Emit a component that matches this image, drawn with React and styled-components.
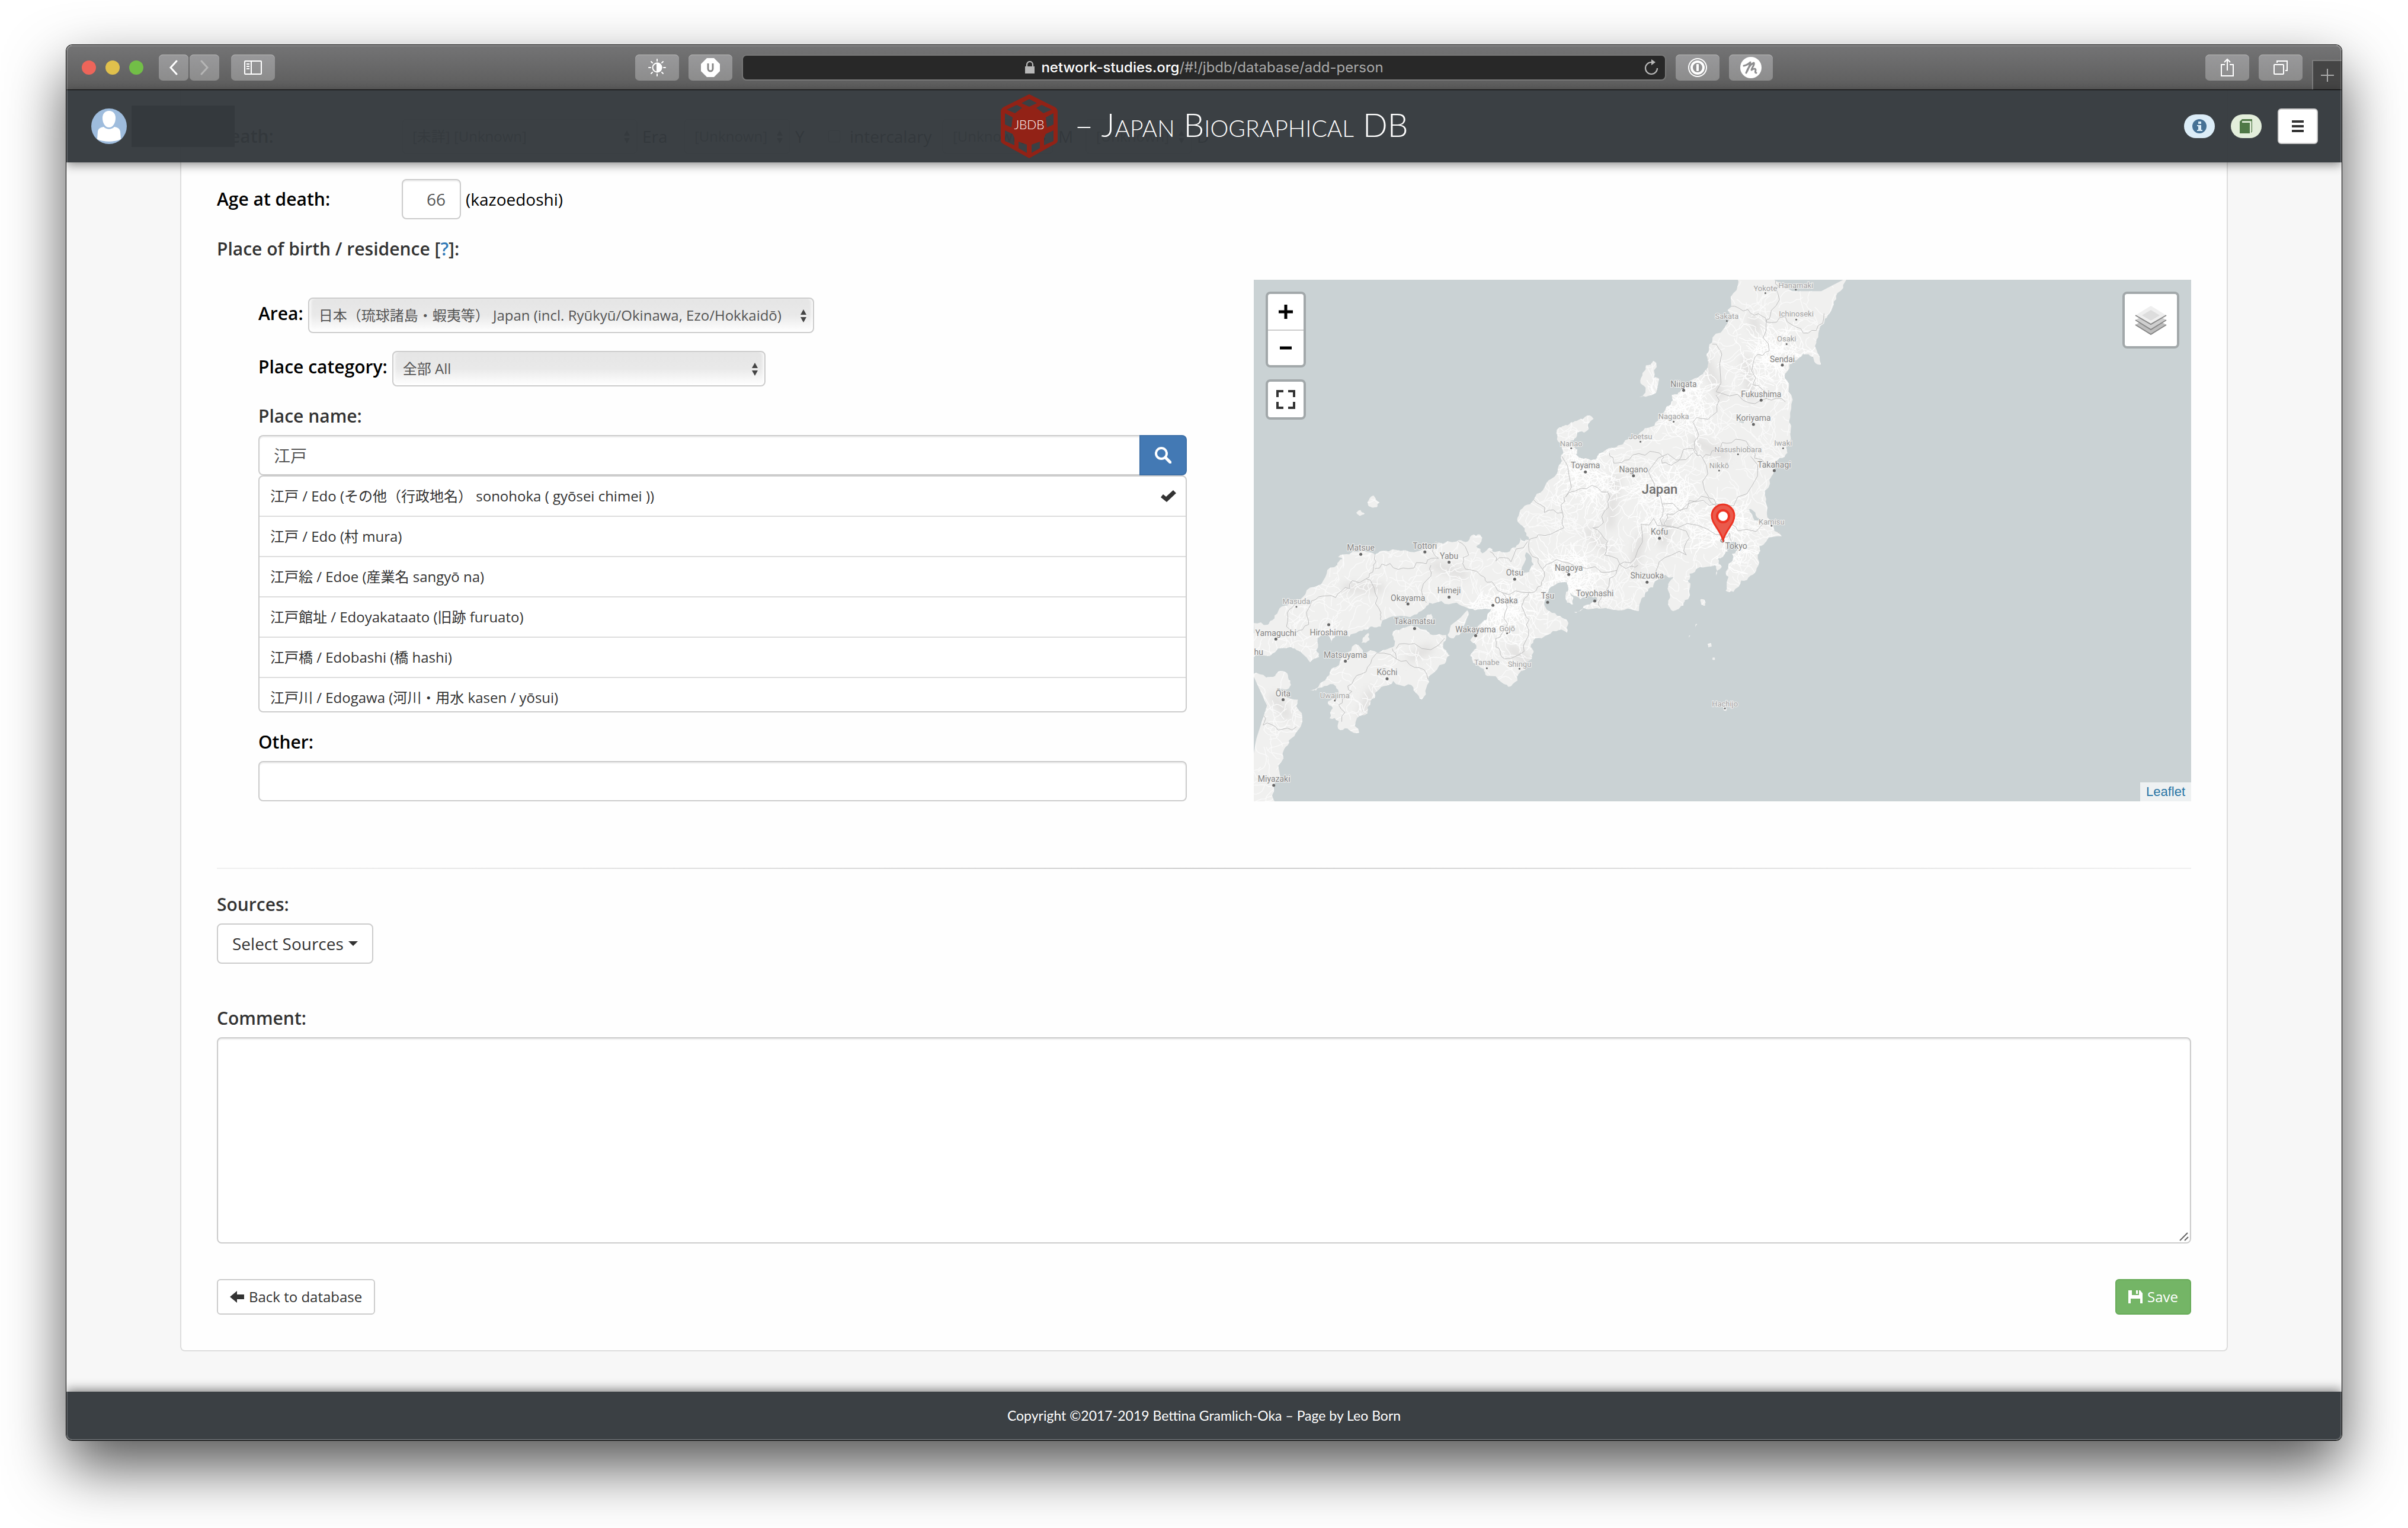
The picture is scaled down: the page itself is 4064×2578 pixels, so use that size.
import React from "react";
import styled, { createGlobalStyle, css } from "styled-components";

const sans = `"Open Sans", "Noto Sans CJK JP", sans-serif`;
const displaySans = `Lato, "Noto Sans CJK JP", sans-serif`;
const systemSans = `Inter, "Noto Sans CJK JP", sans-serif`;

const GlobalStyle = createGlobalStyle`
  * { box-sizing: border-box; }
  body { margin: 0; background: #fff; color: #333; font: 28px/40px ${sans}; }
  button, input, select, textarea { font: inherit; margin: 0; }
  button { cursor: pointer; }
  svg { display: block; flex: none; }
`;

/* ---------- window ---------- */

const Desktop = styled.div`
  padding: 76px 112px 148px;
`;

const Window = styled.div`
  position: relative;
  overflow: hidden;
  border-radius: 10px;
  background: #f7f7f7;
  &::after {
    content: "";
    position: absolute;
    inset: 0;
    z-index: 5;
    border-radius: 10px;
    box-shadow: inset 0 0 0 2px rgba(255, 255, 255, 0.2);
    pointer-events: none;
  }
`;

const WindowShadow = styled.div`
  border-radius: 10px;
  box-shadow: 0 0 0 1px #000, 0 44px 100px rgba(0, 0, 0, 0.68);
`;

const TitleBar = styled.div`
  display: grid;
  grid-template-columns: 1fr 2fr 1fr;
  height: 76px;
  background: linear-gradient(#747475, #5c5c5c);
  border-bottom: 1px solid #000;
`;

const BarGroup = styled.div`
  display: flex;
  align-items: center;
  gap: 16px;
  justify-content: ${(p) => (p.$end ? "flex-end" : "flex-start")};
  padding-left: ${(p) => (p.$inset ? "26px" : "0")};
`;

const Light = styled.span`
  width: 24px;
  height: 24px;
  border-radius: 50%;
  background: ${(p) => p.$color};
`;

const NavPair = styled.div`
  display: flex;
  gap: 2px;
  margin: 0 4px 0 10px;
`;

const BarButton = styled.button`
  display: grid;
  place-items: center;
  width: ${(p) => (p.$narrow ? "50px" : "74px")};
  height: 44px;
  padding: 0;
  border: 0;
  border-radius: 7px;
  background: linear-gradient(#99999b, #8c8c8c);
  box-shadow: inset 0 1px 0 #b4b4b4;
`;

const Address = styled.div`
  position: relative;
  flex: 1;
  display: flex;
  align-items: center;
  justify-content: center;
  gap: 10px;
  height: 44px;
  border: 2px solid #777;
  border-radius: 8px;
  background: #282828;
  color: #a9a9a9;
  font: 24px/30px ${systemSans};
  b { color: #fff; font-weight: 500; }
`;

const Reload = styled.button`
  position: absolute;
  right: 10px;
  padding: 0;
  border: 0;
  background: none;
`;

const NewTab = styled.button`
  display: grid;
  place-items: center;
  align-self: flex-end;
  width: 50px;
  height: 50px;
  padding: 0;
  border: solid #7d7d7d;
  border-width: 2px 0 0 2px;
  background: #454545;
`;

/* ---------- site header ---------- */

const SiteHeader = styled.header`
  position: relative;
  z-index: 2;
  display: grid;
  grid-template-columns: 1fr auto 1fr;
  align-items: center;
  height: 122px;
  padding: 0 40px 0 42px;
  background: rgba(53, 58, 62, 0.97);
  box-shadow: 0 4px 16px rgba(0, 0, 0, 0.45);
`;

const User = styled.div`
  display: flex;
  align-items: center;
  gap: 8px;
`;

const UserName = styled.span`
  width: 174px;
  height: 70px;
  background: #34393d;
`;

const Brand = styled.h1`
  display: flex;
  align-items: center;
  gap: 28px;
  margin: 0;
  color: #fff;
  font: 300 55px/60px ${displaySans};
  font-variant: small-caps;
`;

const BrandName = styled.span`
  padding-bottom: 6px;
`;

const Tools = styled.div`
  display: flex;
  align-items: center;
  justify-content: flex-end;
  gap: 27px;
`;

const Badge = styled.button`
  display: grid;
  place-items: center;
  width: 52px;
  height: 40px;
  padding: 0;
  border: 0;
  border-radius: 20px;
  background: ${(p) => p.$bg};
`;

const MenuButton = styled.button`
  display: grid;
  place-items: center;
  width: 68px;
  height: 60px;
  padding: 0;
  border: 2px solid #ccc;
  border-radius: 6px;
  background: #fff;
`;

/* ---------- form ---------- */

const Main = styled.main`
  margin-top: -122px;
  padding: 0 192px 68px;
`;

const Panel = styled.form`
  padding: 48px 60px 60px;
  border: solid #ddd;
  border-width: 0 2px 2px;
  border-radius: 0 0 8px 8px;
  background: #fefefe;
`;

const Row = styled.div`
  display: flex;
  align-items: center;
  gap: 8px;
  margin-bottom: ${(p) => p.$after || 0}px;
  color: #000;
`;

const Label = styled.label`
  display: block;
  color: ${(p) => (p.$soft ? "#333" : "#000")};
  font: 600 30px/40px ${sans};
  ${(p) =>
    p.$column &&
    css`
      width: 304px;
      flex: none;
    `}
  ${(p) =>
    p.$above &&
    css`
      margin-bottom: 12px;
    `}
  ${(p) =>
    p.$inline &&
    css`
      padding-bottom: 6px;
    `}
`;

const Unit = styled.span`
  width: ${(p) => p.$width}px;
  flex: none;
`;

const Heading = styled.h2`
  margin: 30px 0 32px;
  font: 600 30px/40px ${sans};
  a { color: #337ab7; text-decoration: none; }
`;

const field = css`
  border: 2px solid #ccc;
  border-radius: 8px;
  background: #fff;
  box-shadow: inset 0 2px 2px rgba(0, 0, 0, 0.08);
  color: #555;
`;

const TextInput = styled.input`
  ${field}
  display: block;
  width: 100%;
  height: 68px;
  padding: 0 24px;
  ${(p) =>
    p.$joined &&
    css`
      flex: 1;
      min-width: 0;
      border-right: 0;
      border-radius: 8px 0 0 8px;
    `}
`;

const AgeInput = styled(TextInput)`
  width: 100px;
  flex: none;
  text-align: right;
`;

const SelectBox = styled.div`
  position: relative;
  width: ${(p) => p.$width}px;
  svg {
    position: absolute;
    right: 12px;
    top: 20px;
    pointer-events: none;
  }
`;

const Select = styled.select`
  width: 100%;
  height: 60px;
  padding: 0 34px 0 16px;
  border: 2px solid #ccc;
  border-radius: 8px;
  appearance: none;
  background: linear-gradient(#e5e5e5, #e9e9e9 50%, #fff);
  box-shadow: inset 5px 0 5px -3px #fff, inset -5px 0 5px -3px #fff;
  color: #555;
  font-size: 24px;
`;

const Check = styled.input`
  width: 20px;
  height: 20px;
  margin: 0 8px 0 28px;
`;

const CheckLabel = styled.label`
  width: 148px;
  flex: none;
`;

const Columns = styled.div`
  display: grid;
  grid-template-columns: minmax(0, 99fr) minmax(0, 100fr);
  gap: 113px;
  padding-left: 70px;
`;

const PlaceFields = styled.div`
  display: flex;
  flex-direction: column;
  gap: 30px;
  padding-top: 30px;
`;

const SearchGroup = styled.div`
  display: flex;
`;

const SearchButton = styled.button`
  display: grid;
  place-items: center;
  width: 80px;
  height: 68px;
  border: 2px solid #3d70a8;
  border-radius: 0 8px 8px 0;
  background: #4379b4;
`;

const Results = styled.ul`
  height: 400px;
  margin: 0;
  padding: 0;
  overflow: hidden;
  list-style: none;
  border: 2px solid #ccc;
  border-radius: 8px;
  background: #fff;
`;

const Result = styled.li`
  border-bottom: 2px solid #ddd;
`;

const ResultButton = styled.button`
  display: flex;
  align-items: center;
  justify-content: space-between;
  width: 100%;
  height: 66px;
  padding: 0 16px 0 18px;
  border: 0;
  background: none;
  color: #333;
  font-size: 24px;
`;

const Rule = styled.hr`
  height: 2px;
  margin: 112px 0 40px;
  border: 0;
  background: linear-gradient(90deg, #f0f0f0, #ccc 50%, #f0f0f0);
`;

const Button = styled.button`
  display: inline-flex;
  align-items: center;
  gap: 8px;
  height: ${(p) => (p.$small ? 60 : 68)}px;
  padding: 0 ${(p) => (p.$small ? 20 : 24)}px;
  border: 2px solid ${(p) => (p.$green ? "#67ab58" : "#ccc")};
  border-radius: ${(p) => (p.$small ? 6 : 8)}px;
  background: ${(p) => (p.$green ? "#74b566" : "#fff")};
  color: ${(p) => (p.$green ? "#fff" : "#333")};
  font-size: ${(p) => (p.$small ? 24 : 28)}px;
`;

const CommentBlock = styled.div`
  position: relative;
  margin: 72px 0 60px;
  svg { position: absolute; right: 4px; bottom: 4px; }
`;

const CommentArea = styled.textarea`
  ${field}
  display: block;
  width: 100%;
  height: 348px;
  padding: 12px 24px;
  resize: none;
`;

const Actions = styled.div`
  display: flex;
  justify-content: space-between;
`;

const SiteFooter = styled.footer`
  position: relative;
  height: 82px;
  background: #3b4044;
  box-shadow: 0 -4px 16px rgba(0, 0, 0, 0.45);
  color: #fff;
  text-align: center;
  font: 23px/80px ${displaySans};
`;

/* ---------- map ---------- */

const MapFrame = styled.section`
  position: relative;
  overflow: hidden;
  background: #cad2d4;
`;

const MapArt = styled.svg`
  position: absolute;
  inset: 0;
  width: 100%;
  height: 100%;
  text { font-family: Roboto, sans-serif; text-anchor: middle; paint-order: stroke; stroke: #f4f4f3; stroke-width: 2px; }
`;

const MapControls = styled.div`
  position: absolute;
  top: 20px;
  ${(p) => (p.$right ? "right: 20px;" : "left: 20px;")}
  display: grid;
  gap: 20px;
`;

const ControlBox = styled.div`
  border: 4px solid #a2a8aa;
  border-radius: 8px;
  background: #fff;
`;

const MapButton = styled.button`
  display: grid;
  place-items: center;
  width: ${(p) => p.$size || 60}px;
  height: ${(p) => p.$size || 60}px;
  padding: 0;
  border: 0;
  background: none;
  & + & { border-top: 2px solid #ccc; }
`;

const Attribution = styled.a`
  position: absolute;
  right: 0;
  bottom: 0;
  padding: 0 10px;
  background: #eef1f2;
  color: #2a75a5;
  font: 22px/32px "Liberation Sans", sans-serif;
  text-decoration: none;
`;

/* Outlines are digitised on two overlapping sheets; each sheet has its own origin and scale. */
const sheets = {
  west: ([x, y]) => [(x - 29) / 1.96, (y - 21) / 1.742],
  east: ([x, y]) => [585 + x / 1.537, (y - 21) / 1.742],
};

const outlines = [
  ["west", "29,1030 75,1035 90,1022 110,995 140,978 160,965 200,945 240,920 270,885 305,860 322,842 308,836 345,828 400,820 430,830 450,818 500,815 560,822 600,812 640,793 700,790 730,792 750,772 778,770 782,790 765,805 785,825 810,808 820,820 850,822 880,812 905,798 910,778 925,790 940,785 925,760 905,735 905,715 925,685 955,668 985,640 1015,605 1035,575 1045,545 1048,515 1032,490 1040,455 1060,448 1085,440 1110,430 1140,420 1153,430 1135,445 1135,462 1105,468 1095,485 1075,495 1085,508 1100,520 1095,535 1110,545 1145,552 1165,540 1205,528 1270,505 1310,490 1340,465 1375,450 1400,420 1410,380 1430,360 1460,345 1490,325 1560,325 1560,858 1500,865 1470,885 1465,905 1470,935 1455,965 1435,985 1415,995 1400,975 1400,935 1405,910 1420,895 1385,892 1360,905 1350,925 1325,940 1310,960 1303,995 1270,985 1200,982 1150,988 1095,1000 1090,998 1120,980 1160,968 1165,955 1140,950 1110,960 1075,940 1085,975 1065,970 1060,950 1070,930 1065,910 1030,915 1010,925 1000,950 995,985 1015,1000 1050,1015 1070,1030 1065,1058 1040,1050 1000,1065 960,1075 945,1100 955,1115 930,1145 905,1180 885,1210 870,1217 850,1205 800,1185 790,1165 750,1135 745,1125 765,1105 745,1080 770,1040 800,1020 815,990 770,990 735,985 700,970 650,965 610,970 590,990 560,1005 500,1010 455,1022 450,1040 420,1040 400,1050 375,1055 345,1070 300,1065 285,1090 270,1060 240,1075 235,1110 245,1130 215,1145 190,1120 165,1105 150,1100 100,1115 60,1125 29,1130"],
  ["west", "735,992 740,1005 715,1045 690,1075 670,1065 690,1030"],
  ["west", "270,1190 300,1160 330,1125 365,1092 390,1120 440,1118 475,1105 495,1090 487,1065 520,1045 560,1040 600,1050 620,1065 665,1065 655,1095 665,1110 678,1125 660,1150 610,1185 600,1220 585,1255 565,1235 540,1210 490,1200 460,1215 430,1235 415,1260 405,1295 370,1310 378,1352 345,1345 315,1345 310,1318 280,1310 290,1280 275,1260 310,1240 300,1215 262,1215 235,1228 215,1228 262,1200"],
  ["west", "25,1180 70,1190 100,1185 110,1172 140,1178 150,1200 145,1222 115,1225 130,1245 175,1255 170,1275 190,1320 175,1345 145,1375 130,1400 110,1450 95,1510 102,1560 25,1560"],
  ["west", "1350,260 1360,265 1352,310 1370,312 1345,360 1305,366 1325,345 1308,325 1315,295"],
  ["west", "405,675 425,655 445,675 435,690 415,688"],
  ["west", "368,705 382,698 396,708 380,715"],
  ["west", "395,1070 410,1060 412,1080 385,1088"],
  ["west", "600,1010 616,1003 616,1020 600,1022"],
  ["east", "0,535 50,510 85,490 110,465 140,450 155,415 180,390 185,360 215,340 245,310 270,290 275,240 290,205 320,165 330,110 345,60 355,15 640,15 630,45 615,60 605,95 590,125 580,150 565,190 560,225 572,270 555,262 540,240 515,250 490,270 478,310 488,350 495,400 495,450 490,500 485,530 465,545 450,580 440,620 430,665 432,700 445,735 470,775 430,790 408,830 405,870 390,890 365,905 345,938 325,935 328,910 325,880 345,835 325,820 305,840 315,865 300,890 300,862 265,858 235,870 225,895 230,935 210,975 190,995 175,975 178,910 190,895 145,895 120,935 100,995 60,985 0,982"],
  ["east", "260,960 270,962 272,978 262,976"],
  ["east", "246,1045 249,1032 251,1035"],
  ["east", "278,1092 286,1089 289,1098 281,1102"],
  ["east", "291,1132 297,1132 297,1138 291,1138"],
  ["east", "229,1074 232,1066 233,1068"],
  ["east", "318,1276 328,1282 326,1289 320,1286"],
];

const lakes = [
  ["west", "930,822 948,838 955,858 940,880 912,884 920,860"],
  ["east", "385,695 402,705 420,728 400,728"],
  ["east", "330,798 350,792 355,815 338,830 326,812"],
  ["east", "362,428 370,428 370,444 360,440"],
];

const borders = [
  ["west", "430,830 425,870 400,900 355,905 320,935 270,950 220,965 205,1010 190,1050"],
  ["west", "160,965 140,1000 150,1050 190,1050"],
  ["west", "400,900 430,940 450,1000 450,1022"],
  ["west", "430,870 480,855 540,870 600,855 640,840 630,793"],
  ["west", "615,860 605,900 600,970"],
  ["west", "705,790 740,830 720,855 780,890 800,910 850,940 940,940 980,920 990,880 970,840 940,785"],
  ["west", "810,820 830,848 880,850 935,790"],
  ["west", "850,940 860,1000 850,1060 830,1100 850,1130 890,1130 930,1080 940,1020 915,980 940,940"],
  ["west", "955,668 990,705 1050,705 1055,750 970,770 940,785"],
  ["west", "1048,540 1060,660 1130,635 1200,645 1190,700 1150,750 1200,790 1190,830 1260,870 1300,860"],
  ["west", "1050,705 1055,660"],
  ["west", "985,870 1050,850 1130,870 1230,875 1205,910 1180,950 1178,985"],
  ["west", "1205,530 1220,560 1270,550 1340,525 1370,530 1380,560 1420,560 1450,520 1500,540"],
  ["west", "1230,875 1290,840 1310,740 1390,745 1395,710 1470,670 1560,680"],
  ["west", "1390,745 1470,780 1460,830 1370,850 1355,900"],
  ["west", "487,1105 500,1135 420,1135 385,1180 340,1215 345,1250 310,1270 320,1320"],
  ["west", "500,1105 560,1090 660,1075"],
  ["west", "500,1135 560,1160 605,1195"],
  ["west", "29,1265 60,1330 110,1345 170,1335"],
  ["east", "335,100 360,105 400,125 430,145 480,130 520,165 560,170 580,120"],
  ["east", "455,21 460,60 440,130 430,150 438,230 400,250 395,330 430,370 480,380"],
  ["east", "290,210 315,240 300,350 370,375 430,370"],
  ["east", "300,360 290,420 240,440 245,520 265,545 300,520 340,500 385,510 400,545 465,548"],
  ["east", "265,545 270,640 300,680 380,650 390,540"],
  ["east", "240,530 150,545 130,600 160,680 250,670 300,685 340,740 380,755 420,740 470,770"],
  ["east", "160,680 155,725 200,750 300,770 335,765 340,790"],
];

const makeRandom = (seed) => () => {
  seed = (seed * 1664525 + 1013904223) % 4294967296;
  return seed / 4294967296;
};

function tracePath([sheet, text], closed, rough, seed) {
  const random = makeRandom(seed);
  let points = text.split(" ").map((p) => sheets[sheet](p.split(",").map(Number)));
  if (closed) points.push(points[0]);
  for (let pass = 0; pass < 2; pass++) {
    const next = [];
    points.forEach((a, i) => {
      next.push(a);
      const b = points[i + 1];
      if (!b) return;
      const k = (random() - 0.5) * rough;
      next.push([(a[0] + b[0]) / 2 - (b[1] - a[1]) * k, (a[1] + b[1]) / 2 + (b[0] - a[0]) * k]);
    });
    points = next;
  }
  return "M" + points.map(([x, y]) => `${x.toFixed(1)} ${y.toFixed(1)}`).join("L") + (closed ? "Z" : "");
}

function roadPaths(count, seed, centre, spread) {
  const random = makeRandom(seed);
  let d = "";
  for (let i = 0; i < count; i++) {
    let x = centre ? centre[0] + (random() + random() - 1) * spread : random() * 1010;
    let y = centre ? centre[1] + (random() + random() - 1) * spread : random() * 880;
    let angle = random() * 6.28;
    d += `M${x.toFixed(1)} ${y.toFixed(1)}`;
    for (let s = 0; s < 8; s++) {
      angle += (random() - 0.5) * 1.5;
      x += Math.cos(angle) * 6;
      y += Math.sin(angle) * 6;
      d += `L${x.toFixed(1)} ${y.toFixed(1)}`;
    }
  }
  return d;
}

const landPaths = outlines.map((o, i) => tracePath(o, true, 0.45, i + 11));
const lakePaths = lakes.map((o, i) => tracePath(o, true, 0.4, i + 51));
const borderPaths = borders.map((o, i) => tracePath(o, false, 0.6, i + 91));
const roads = roadPaths(2300, 7);
const cityRoads = [[792, 425], [415, 560], [535, 500], [725, 210], [560, 330], [870, 130], [690, 370]]
  .map((c, i) => roadPaths(90, i + 300, c, 60))
  .join("");

/* sheet, name, label x, label y, dot x, dot y, minor */
const cities = [
  ["west", "Niigata", 1451, 327, 1451, 346],
  ["west", "Nagaoka", 1418, 421, 1418, 438, 1],
  ["west", "Joetsu", 1308, 481, 1308, 497, 1],
  ["west", "Nanao", 1079, 501, 1079, 516, 1],
  ["west", "Toyama", 1126, 567, 1126, 586],
  ["west", "Nagano", 1285, 579, 1285, 597],
  ["west", "Kofu", 1371, 761, 1371, 781],
  ["west", "Matsue", 383, 809, 383, 828],
  ["west", "Tottori", 595, 803, 595, 821],
  ["west", "Yabu", 675, 833, 675, 851],
  ["west", "Otsu", 892, 882, 892, 901],
  ["west", "Nagoya", 1071, 868, 1071, 887],
  ["west", "Shizuoka", 1330, 890, 1330, 910],
  ["west", "Himeji", 675, 934, 675, 954],
  ["west", "Okayama", 539, 956, 539, 974],
  ["west", "Osaka", 864, 963, 820, 978],
  ["west", "Tsu", 1001, 950, 1001, 969],
  ["west", "Toyohashi", 1157, 943, 1157, 965],
  ["west", "Masuda", 170, 966, 170, 982, 1],
  ["west", "Takamatsu", 561, 1025, 561, 1046],
  ["west", "Wakayama", 763, 1048, 763, 1067],
  ["west", "Gojō", 867, 1045, 867, 1060, 1],
  ["west", "Yamaguchi", 102, 1060, 102, 1077],
  ["west", "Hiroshima", 277, 1057, 277, 1035],
  ["west", "hu", 45, 1115],
  ["west", "Matsuyama", 332, 1124, 332, 1142],
  ["west", "Tanabe", 800, 1145, 800, 1163, 1],
  ["west", "Shingu", 908, 1149, 908, 1164, 1],
  ["west", "Kōchi", 470, 1175, 470, 1194],
  ["west", "Ōita", 126, 1237, 126, 1255],
  ["west", "Uwajima", 297, 1242, 297, 1258, 1],
  ["west", "Miyazaki", 96, 1488, 95, 1507],
  ["east", "Yokote", 428, 46, 428, 60, 1],
  ["east", "Hanamaki", 507, 37, 507, 50, 1],
  ["east", "Sakata", 328, 127, 328, 142, 1],
  ["east", "Ichinoseki", 508, 121, 508, 138, 1],
  ["east", "Osaki", 483, 194, 483, 210, 1],
  ["east", "Sendai", 472, 255, 472, 272],
  ["east", "Fukushima", 417, 357, 417, 375],
  ["east", "Koriyama", 397, 427, 397, 446],
  ["east", "Iwaki", 474, 500, 474, 516, 1],
  ["east", "Nasushiobara", 357, 519, 357, 534, 1],
  ["east", "Nikkō", 308, 567, 308, 582, 1],
  ["east", "Takahagi", 451, 564, 451, 582],
  ["east", "Kamisu", 444, 731, 444, 744, 1],
  ["east", "Tokyo", 352, 804],
  ["east", "Hachijo", 323, 1267, 323, 1281, 1],
];

function JapanMap() {
  return (
    <MapArt viewBox="0 0 1583 880" preserveAspectRatio="xMinYMin slice" role="img" aria-label="Map of Japan">
      <defs>
        <clipPath id="land">
          {landPaths.map((d, i) => <path key={i} d={d} />)}
        </clipPath>
        <filter id="relief" x="-50%" y="-50%" width="200%" height="200%">
          <feGaussianBlur stdDeviation="7" />
        </filter>
      </defs>
      {landPaths.map((d, i) => <path key={i} d={d} fill="#f0f0ef" />)}
      <g clipPath="url(#land)">
        <g fill="none" stroke="#dfdedd" strokeWidth="14" filter="url(#relief)">
          <path d="M612 330 600 420M655 430 640 490M700 400 690 450M600 460 560 420M740 270 800 300M760 130 790 200M830 130 840 200M840 60 850 90" />
          <path d="M430 620 470 650M260 640 300 620M200 690 180 740M30 700 60 740M300 480 360 500M150 520 220 520" />
        </g>
        <path d={roads} fill="none" stroke="#fafafa" strokeWidth="1.3" />
        <path d={cityRoads} fill="none" stroke="#fff" strokeWidth="1.2" />
        <g fill="none" stroke="#bdbdbd" strokeWidth="1">
          {borderPaths.map((d, i) => <path key={i} d={d} />)}
        </g>
      </g>
      {lakePaths.map((d, i) => <path key={i} d={d} fill="#cad2d4" />)}
      {cities.map(([sheet, name, x, y, dotX, dotY, minor]) => {
        const [lx, ly] = sheets[sheet]([x, y]);
        const dot = dotX && sheets[sheet]([dotX, dotY]);
        return (
          <g key={name}>
            <text x={lx} y={ly + 5} fontSize={minor ? 13 : 14} fill={minor ? "#a3a3a3" : "#858585"}>{name}</text>
            {dot && <circle cx={dot[0]} cy={dot[1]} r={minor ? 1.5 : 2.5} fill="#666" />}
          </g>
        );
      })}
      <text x="685" y="361" fontSize="22" fontWeight="500" fill="#6e6e6e">Japan</text>
      <circle cx="791" cy="440" r="3" fill="#ddd" stroke="#666" />
      <path d="M792 439C786 420 773 412 773 398a19 19 0 0 1 38 0C811 412 798 420 792 439Z" fill="#ea5a4c" stroke="#ec3323" strokeWidth="3" />
      <circle cx="792" cy="399" r="10" fill="#fff" stroke="#ec3323" strokeWidth="4" />
    </MapArt>
  );
}

/* ---------- icons ---------- */

const Icon = ({ w, h = w, box, children, ...rest }) => (
  <svg width={w} height={h} viewBox={box || `0 0 ${w} ${h}`} fill="none" aria-hidden="true" {...rest}>{children}</svg>
);

const Chevron = ({ flip }) => (
  <Icon w={16} h={26} stroke={flip ? "#b5b5b5" : "#fff"} strokeWidth="3" strokeLinecap="round">
    <path d={flip ? "M3 2l10 11L3 24" : "M13 2L3 13l10 11"} />
  </Icon>
);

const SidebarIcon = () => (
  <Icon w={30} h={24} stroke="#fff" strokeWidth="2">
    <rect x="1" y="1" width="28" height="22" rx="1" />
    <path d="M12 1v22M4 6h5M4 10h5M4 14h5" />
  </Icon>
);

const SunIcon = () => (
  <Icon w={30} stroke="#fff" strokeWidth="2" strokeLinecap="round">
    <circle cx="15" cy="15" r="7.5" />
    <path d="M15 7.5a7.5 7.5 0 0 1 0 15z" fill="#fff" />
    <path d="M15 1v3M15 26v3M1 15h3M26 15h3M5 5l2 2M23 23l2 2M25 5l-2 2M7 23l-2 2" />
  </Icon>
);

const ShieldIcon = () => (
  <Icon w={32}>
    <path d="M10 0h12l10 10v12L22 32H10L0 22V10z" fill="#fff" />
    <path d="M12 9v9a4 4 0 0 0 8 0V9" stroke="#888" strokeWidth="3" />
  </Icon>
);

const LockIcon = () => (
  <Icon w={18} h={22}>
    <path d="M1 9h16v12H1z" fill="#b8b8b8" />
    <path d="M4 10V6a5 5 0 0 1 10 0v4" stroke="#b8b8b8" strokeWidth="2.2" />
  </Icon>
);

const ReloadIcon = () => (
  <Icon w={26} h={28} stroke="#b8b8b8" strokeWidth="2.2">
    <path d="M23 15a10 10 0 1 1-10-10h3" />
    <path d="M13 0l7 5-7 5z" fill="#b8b8b8" stroke="none" />
  </Icon>
);

const KeyholeIcon = () => (
  <Icon w={32}>
    <circle cx="16" cy="16" r="15" stroke="#fff" strokeWidth="2" />
    <circle cx="16" cy="16" r="10" stroke="#fff" strokeWidth="4" />
    <rect x="14" y="10" width="4" height="12" rx="1" fill="#fff" />
  </Icon>
);

const ScriptIcon = () => (
  <Icon w={36}>
    <circle cx="18" cy="18" r="18" fill="#fff" />
    <path d="M6 15c5-1 9-4 11-6-1 6-4 13-7 18 3-8 8-15 13-17 2 3-4 9-4 12 3-2 7-3 7 0s-2 4 1 5" stroke="#8d8d8f" strokeWidth="3" strokeLinecap="round" strokeLinejoin="round" />
  </Icon>
);

const ShareIcon = () => (
  <Icon w={24} h={32} stroke="#fff" strokeWidth="2">
    <path d="M8 11H2v19h20V11h-6M12 21V2M7 7l5-5 5 5" />
  </Icon>
);

const TabsIcon = () => (
  <Icon w={26} stroke="#fff" strokeWidth="2">
    <rect x="2" y="8" width="16" height="16" rx="1" />
    <path d="M7 5V2h17v16h-3" />
  </Icon>
);

const PlusIcon = () => (
  <Icon w={22} stroke="#aaa" strokeWidth="2"><path d="M11 0v22M0 11h22" /></Icon>
);

const Avatar = () => (
  <Icon w={60}>
    <circle cx="30" cy="30" r="30" fill="#9ebcdd" />
    <path d="M30 4c7 0 11 5 11 12 0 8-4 16-11 16S19 24 19 16C19 9 23 4 30 4z" fill="#fff" />
    <path d="M21 31c5 5 13 5 18 0 6 1 9 3 10 8l1 13c-12 5-28 5-40 0l1-13c1-5 4-7 10-8z" fill="#fff" />
  </Icon>
);

const holes = [
  "M48 8L61 15 48 21 35 15Z",
  "M27 18L36 23 24 32 10 26Z", "M69 18L60 23 72 32 86 26Z",
  "M7 32L20 39 18 56 7 51Z", "M89 32L76 39 78 56 89 51Z",
  "M7 61L20 67 23 74V86L7 79Z", "M89 61L76 67 73 74V86L89 79Z",
  "M30 80L44 85V99L30 91Z", "M66 80L52 85V99L66 91Z",
].join("");

const LogoText = styled.text`
  font: 300 21px ${displaySans};
  font-variant: normal;
  text-anchor: middle;
`;

const Logo = () => (
  <svg width="96" height="108" viewBox="0 0 96 108" role="img" aria-label="JBDB">
    <path fillRule="evenodd" fill="#922216" d={`M48 0L92 22Q96 25 96 30V78Q96 81 93 83L48 108 3 83Q0 81 0 78V30Q0 25 4 22Z${holes}`} />
    <LogoText x="48" y="59" fill="#fff">JBDB</LogoText>
  </svg>
);

const InfoIcon = () => (
  <Icon w={24}>
    <circle cx="12" cy="12" r="12" fill="#457195" />
    <path d="M10 4h5v4h-5zM8 10h7v8h2v2H8v-2h2v-6H8z" fill="#dcedf8" />
  </Icon>
);

const BookIcon = () => (
  <Icon w={24}>
    <path d="M1 4l4-4h17v21l-2 2V4H5v2h13v18H1z" fill="#4f7846" />
    <path d="M5 4h15v17" stroke="#e3eedb" strokeWidth="1.5" />
  </Icon>
);

const MenuIcon = () => (
  <Icon w={20} stroke="#333" strokeWidth="4"><path d="M0 2h20M0 10h20M0 18h20" /></Icon>
);

const Arrows = () => (
  <Icon w={12} h={22}><path d="M6 0l5 9H1zM6 22l5-9H1z" fill="#444" /></Icon>
);

const SearchIcon = () => (
  <Icon w={28} stroke="#fff">
    <circle cx="11" cy="11" r="9" strokeWidth="4" />
    <path d="M18 18l8 8" strokeWidth="5" strokeLinecap="round" />
  </Icon>
);

const TickIcon = () => (
  <Icon w={26} h={20}><path d="M0 12l4-5 5 4L21 0l5 5L10 20z" fill="#333" /></Icon>
);

const LeftIcon = () => (
  <Icon w={24} h={20}><path d="M0 10L12 0v6h12v8H12v6z" fill="#333" /></Icon>
);

const FloppyIcon = () => (
  <Icon w={24} h={22}><path fillRule="evenodd" fill="#fff" d="M0 0h6v8h12V0h2l4 5v17h-4v-8H4v8H0zM13 0h3v6h-3z" /></Icon>
);

const Caret = () => (
  <Icon w={16} h={8}><path d="M0 0h16L8 8z" fill="#333" /></Icon>
);

const ResizeIcon = () => (
  <Icon w={16} stroke="#666" strokeWidth="2"><path d="M1 15L14 2M9 15l6-6" /></Icon>
);

const FullscreenIcon = () => (
  <Icon w={32} stroke="#333" strokeWidth="4">
    <path d="M2 12V2h10M20 2h10v10M30 20v10H20M12 30H2V20" />
  </Icon>
);

const LayersIcon = () => (
  <Icon w={54} h={52}>
    <path d="M1 34l26-15 26 15-26 16z" fill="#bdbdbd" />
    <path d="M1 34l26 16 26-16" stroke="#888" strokeWidth="2" />
    <path d="M1 26l26-15 26 15-26 16z" fill="#cfcfcf" />
    <path d="M1 26l26 16 26-16" stroke="#888" strokeWidth="2" />
    <path d="M1 18L27 2l26 16-26 15z" fill="#efefef" />
    <path d="M12 18L27 9l15 9-15 9z" fill="#ddd" />
    <path d="M1 18l26 15 26-15" stroke="#888" strokeWidth="2" />
  </Icon>
);

/* ---------- page ---------- */

function Choice({ id, width, children, label }) {
  return (
    <SelectBox $width={width}>
      <Select id={id} aria-label={label}>
        <option>{children}</option>
      </Select>
      <Arrows />
    </SelectBox>
  );
}

const places = [
  "江戸 / Edo (その他（行政地名） sonohoka ( gyōsei chimei ))",
  "江戸 / Edo (村 mura)",
  "江戸絵 / Edoe (産業名 sangyō na)",
  "江戸館址 / Edoyakataato (旧跡 furuato)",
  "江戸橋 / Edobashi (橋 hashi)",
  "江戸川 / Edogawa (河川・用水 kasen / yōsui)",
];

export default function App() {
  return (
    <Desktop>
      <GlobalStyle />
      <WindowShadow>
        <Window>
          <TitleBar>
            <BarGroup $inset>
              <Light $color="#ed655a" />
              <Light $color="#e0c04c" />
              <Light $color="#72be47" />
              <NavPair>
                <BarButton $narrow aria-label="Back"><Chevron /></BarButton>
                <BarButton $narrow aria-label="Forward"><Chevron flip /></BarButton>
              </NavPair>
              <BarButton aria-label="Sidebar"><SidebarIcon /></BarButton>
            </BarGroup>
            <BarGroup>
              <BarButton aria-label="Appearance"><SunIcon /></BarButton>
              <BarButton aria-label="Blocker"><ShieldIcon /></BarButton>
              <Address>
                <LockIcon />
                <span><b>network-studies.org</b>/#!/jbdb/database/add-person</span>
                <Reload aria-label="Reload"><ReloadIcon /></Reload>
              </Address>
              <BarButton aria-label="Passwords"><KeyholeIcon /></BarButton>
              <BarButton aria-label="Notes"><ScriptIcon /></BarButton>
            </BarGroup>
            <BarGroup $end>
              <BarButton aria-label="Share"><ShareIcon /></BarButton>
              <BarButton aria-label="Tabs"><TabsIcon /></BarButton>
              <NewTab aria-label="New tab"><PlusIcon /></NewTab>
            </BarGroup>
          </TitleBar>

          <SiteHeader>
            <User>
              <Avatar />
              <UserName />
            </User>
            <Brand>
              <Logo />
              <BrandName>– Japan Biographical DB</BrandName>
            </Brand>
            <Tools>
              <Badge $bg="#dcedf8" aria-label="Information"><InfoIcon /></Badge>
              <Badge $bg="#e3eedb" aria-label="Manual"><BookIcon /></Badge>
              <MenuButton aria-label="Menu"><MenuIcon /></MenuButton>
            </Tools>
          </SiteHeader>

          <Main>
            <Panel onSubmit={(e) => e.preventDefault()}>
              <Row $after={42}>
                <Label $column htmlFor="era">Death:</Label>
                <Choice id="era" width={398}>[未詳] [Unknown]</Choice>
                <Unit $width={62}>Era</Unit>
                <Choice label="Year" width={180}>[Unknown]</Choice>
                <Unit $width={20}>Y</Unit>
                <Check type="checkbox" id="intercalary" />
                <CheckLabel htmlFor="intercalary">intercalary</CheckLabel>
                <Choice label="Month" width={188}>[Unknown]</Choice>
                <Unit $width={38}>M</Unit>
                <Choice label="Day" width={180}>[Unknown]</Choice>
                <Unit $width={38}>D</Unit>
              </Row>
              <Row>
                <Label $column htmlFor="age">Age at death:</Label>
                <AgeInput id="age" type="text" inputMode="numeric" defaultValue="66" />
                <span>(kazoedoshi)</span>
              </Row>

              <Heading>Place of birth / residence [<a href="#help">?</a>]:</Heading>

              <Columns>
                <PlaceFields>
                  <Row>
                    <Label $inline htmlFor="area">Area:</Label>
                    <Choice id="area" width={854}>日本（琉球諸島・蝦夷等） Japan (incl. Ryūkyū/Okinawa, Ezo/Hokkaidō)</Choice>
                  </Row>
                  <Row>
                    <Label $inline htmlFor="category">Place category:</Label>
                    <Choice id="category" width={630}>全部 All</Choice>
                  </Row>
                  <div>
                    <Label $soft $above htmlFor="place">Place name:</Label>
                    <SearchGroup>
                      <TextInput $joined id="place" type="text" defaultValue="江戸" />
                      <SearchButton type="button" aria-label="Search"><SearchIcon /></SearchButton>
                    </SearchGroup>
                    <Results>
                      {places.map((place, i) => (
                        <Result key={place}>
                          <ResultButton type="button">
                            {place}
                            {i === 0 && <TickIcon />}
                          </ResultButton>
                        </Result>
                      ))}
                    </Results>
                  </div>
                  <div>
                    <Label $above htmlFor="other">Other:</Label>
                    <TextInput id="other" type="text" />
                  </div>
                </PlaceFields>

                <MapFrame>
                  <JapanMap />
                  <MapControls>
                    <ControlBox>
                      <MapButton type="button" aria-label="Zoom in">
                        <Icon w={26} stroke="#000" strokeWidth="5"><path d="M13 1v24M1 13h24" /></Icon>
                      </MapButton>
                      <MapButton type="button" aria-label="Zoom out">
                        <Icon w={20} stroke="#000" strokeWidth="5"><path d="M0 10h20" /></Icon>
                      </MapButton>
                    </ControlBox>
                    <ControlBox>
                      <MapButton type="button" aria-label="Full screen"><FullscreenIcon /></MapButton>
                    </ControlBox>
                  </MapControls>
                  <MapControls $right>
                    <ControlBox>
                      <MapButton type="button" $size={88} aria-label="Layers"><LayersIcon /></MapButton>
                    </ControlBox>
                  </MapControls>
                  <Attribution href="#leaflet">Leaflet</Attribution>
                </MapFrame>
              </Columns>

              <Rule />

              <Label $soft $above htmlFor="sources">Sources:</Label>
              <Button type="button" id="sources">Select Sources <Caret /></Button>

              <CommentBlock>
                <Label $soft $above htmlFor="comment">Comment:</Label>
                <CommentArea id="comment" />
                <ResizeIcon />
              </CommentBlock>

              <Actions>
                <Button type="button" $small><LeftIcon /> Back to database</Button>
                <Button type="submit" $small $green><FloppyIcon /> Save</Button>
              </Actions>
            </Panel>
          </Main>

          <SiteFooter>Copyright ©2017-2019 Bettina Gramlich-Oka – Page by Leo Born</SiteFooter>
        </Window>
      </WindowShadow>
    </Desktop>
  );
}
